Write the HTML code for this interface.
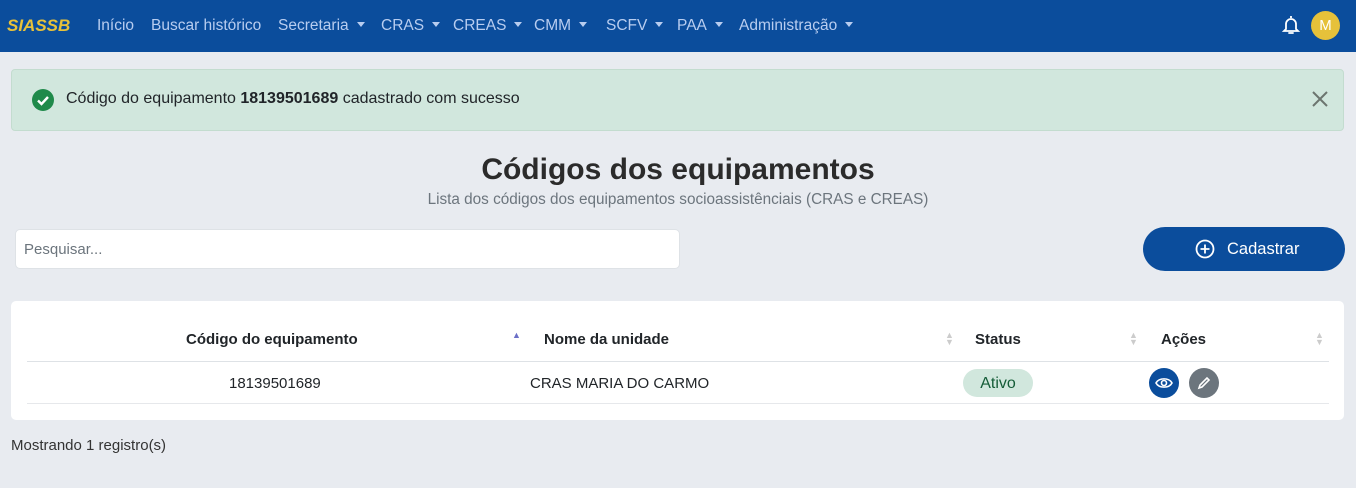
<!DOCTYPE html>
<html><head><meta charset="utf-8"><style>
*{box-sizing:border-box;margin:0;padding:0}
body{width:1356px;height:488px;background:#e8ebf0;font-family:"Liberation Sans",sans-serif;position:relative;overflow:hidden;color:#212529}
.nav{position:absolute;left:0;top:0;width:1356px;height:52px;background:#0b4d9c}
.nav span{position:absolute;top:17px;font-size:15.5px;color:#b8cdf0;white-space:nowrap}
.car{display:inline-block;width:0;height:0;border-left:4px solid transparent;border-right:4px solid transparent;border-top:5px solid #b8cdf0;margin-left:8px;vertical-align:3px}
.logo{position:absolute;left:7px;top:16px;font-weight:bold;font-style:italic;color:#e8c23a;font-size:17px}
.av{position:absolute;left:1311px;top:11px;width:29px;height:29px;border-radius:50%;background:#e6c13a;color:#fff;text-align:center;line-height:29px;font-size:15px}
.alert{position:absolute;left:11px;top:69px;width:1333px;height:62px;background:#d1e7dd;border:1px solid #c3dccf;border-radius:4px}
.abs{position:absolute}
.card{position:absolute;left:11px;top:301px;width:1333px;height:119px;background:#fff;border-radius:5px}
.h{position:absolute;top:331px;font-weight:bold;font-size:15px}
.sort{position:absolute;top:332px;font-size:9px;color:#ccc;line-height:7px}
</style></head><body>
<div class="nav">
<div class="logo">SIASSB</div>
<span style="left:97px">Início</span>
<span style="left:151px">Buscar histórico</span>
<span style="left:278px">Secretaria<i class="car"></i></span>
<span style="left:381px">CRAS<i class="car"></i></span>
<span style="left:453px">CREAS<i class="car"></i></span>
<span style="left:534px">CMM<i class="car"></i></span>
<span style="left:606px">SCFV<i class="car"></i></span>
<span style="left:677px">PAA<i class="car"></i></span>
<span style="left:739px">Administração<i class="car"></i></span>
<svg class="abs" style="left:1280px;top:14px" width="22" height="22" viewBox="0 0 22 22" fill="none" stroke="#fff" stroke-width="1.8"><path d="M11 2v2M6 15V10a5 5 0 0 1 10 0v5l2 2H4z"/><path d="M9 19h4" stroke-linecap="round"/></svg>
<div class="av">M</div>
</div>
<div class="alert">
<svg class="abs" style="left:19px;top:18px" width="24" height="24" viewBox="0 0 24 24"><circle cx="12" cy="12" r="11" fill="#1f8a4a"/><path d="M7 12.5l3.5 3.5 6.5-7" stroke="#fff" stroke-width="2.4" fill="none"/></svg>
<div class="abs" style="left:54px;top:20px;font-size:16px">Código do equipamento <b>18139501689</b> cadastrado com sucesso</div>
<svg class="abs" style="left:1299px;top:20px" width="18" height="18" viewBox="0 0 18 18" stroke="#6c756f" stroke-width="2"><path d="M2 2l14 14M16 2L2 16"/></svg>
</div>
<div class="abs" style="left:0;width:1356px;top:153px;text-align:center;font-size:30px;font-weight:bold;color:#2b2b2b">Códigos dos equipamentos</div>
<div class="abs" style="left:0;width:1356px;top:191px;text-align:center;font-size:15.3px;color:#6c757d">Lista dos códigos dos equipamentos socioassistênciais (CRAS e CREAS)</div>
<div class="abs" style="left:15px;top:229px;width:665px;height:40px;background:#fff;border:1px solid #dee2e6;border-radius:5px;padding:11px 8px;font-size:15px;color:#6c757d">Pesquisar...</div>
<div class="abs" style="left:1143px;top:227px;width:202px;height:44px;background:#0b4d9c;border-radius:22px;color:#fff;font-size:16.5px">
<svg class="abs" style="left:52px;top:12px" width="20" height="20" viewBox="0 0 20 20" fill="none" stroke="#fff" stroke-width="1.8"><circle cx="10" cy="10" r="8.5"/><path d="M10 5.5v9M5.5 10h9"/></svg>
<span class="abs" style="left:84px;top:13px">Cadastrar</span></div>
<div class="card"></div>
<div class="h" style="left:186px">Código do equipamento</div>
<div class="abs" style="left:512px;top:330px;font-size:9px;color:#6b6fc7">▲</div>
<div class="h" style="left:544px">Nome da unidade</div>
<div class="sort" style="left:945px">▲<br>▼</div>
<div class="h" style="left:975px">Status</div>
<div class="sort" style="left:1129px">▲<br>▼</div>
<div class="h" style="left:1161px">Ações</div>
<div class="sort" style="left:1315px">▲<br>▼</div>
<div class="abs" style="left:27px;top:361px;width:1302px;height:1px;background:#dee2e6"></div>
<div class="abs" style="left:27px;top:403px;width:1302px;height:1px;background:#e6e8eb"></div>
<div class="abs" style="left:229px;top:375px;font-size:15px">18139501689</div>
<div class="abs" style="left:530px;top:375px;font-size:15px">CRAS MARIA DO CARMO</div>
<div class="abs" style="left:963px;top:369px;width:70px;height:28px;border-radius:14px;background:#d1e7dd;color:#145c37;font-size:16px;text-align:center;line-height:29px">Ativo</div>
<div class="abs" style="left:1149px;top:368px;width:30px;height:30px;border-radius:50%;background:#0b4d9c">
<svg class="abs" style="left:6px;top:8px" width="18" height="14" viewBox="0 0 18 14" fill="none" stroke="#fff" stroke-width="1.6"><path d="M1 7C4 1.5 14 1.5 17 7C14 12.5 4 12.5 1 7z"/><circle cx="9" cy="7" r="2.5"/></svg></div>
<div class="abs" style="left:1189px;top:368px;width:30px;height:30px;border-radius:50%;background:#6c757d">
<svg class="abs" style="left:8px;top:8px" width="14" height="14" viewBox="0 0 14 14" fill="none" stroke="#fff" stroke-width="1.6"><path d="M2 12l1-3 7-7 2 2-7 7z"/></svg></div>
<div class="abs" style="left:11px;top:437px;font-size:15px;color:#333">Mostrando 1 registro(s)</div>
</body></html>
